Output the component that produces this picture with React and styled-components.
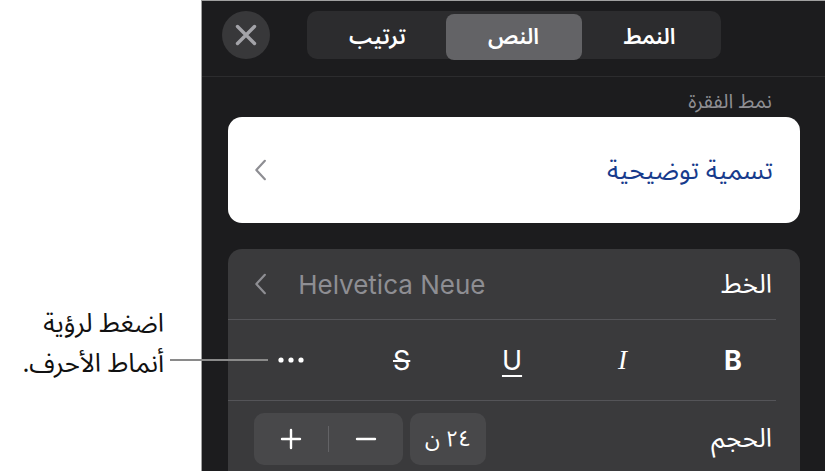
import styled, {createGlobalStyle} from "styled-components";

const GlobalStyle = createGlobalStyle`
  html, body {
    margin: 0;
    padding: 0;
    background: #fff;
  }
  * {
    box-sizing: border-box;
  }
`

const arabic = `"Noto Sans Arabic", "DejaVu Sans", "Noto Sans", sans-serif`
const latin = `Inter, "Liberation Sans", sans-serif`

function Chevron({color = '#8e8e93', size = 18}){
  return(
    <svg width={size * 0.6} height={size} viewBox="0 0 10 18" fill="none">
      <path d="M8.5 1.5 L1.5 9 L8.5 16.5" stroke={color} strokeWidth="1.8" strokeLinecap="round" strokeLinejoin="round"/>
    </svg>
  )
}

function App(){
  return(
    <Page>
      <GlobalStyle/>
      <Callout>
        <CalloutLineText>اضغط لرؤية</CalloutLineText>
        <CalloutLineText>أنماط الأحرف.</CalloutLineText>
      </Callout>
      <CalloutLine/>
      <Panel>
        <Header>
          <CloseButton>
            <svg width="22" height="22" viewBox="0 0 22 22">
              <path d="M2.5 2.5 L19.5 19.5 M19.5 2.5 L2.5 19.5" stroke="#a3a3a8" strokeWidth="3.4" strokeLinecap="round"/>
            </svg>
          </CloseButton>
          <Segmented>
            <Segment>ترتيب</Segment>
            <Segment $active>النص</Segment>
            <Segment>النمط</Segment>
          </Segmented>
        </Header>
        <SectionLabel>نمط الفقرة</SectionLabel>
        <StyleCard>
          <StyleName>تسمية توضيحية</StyleName>
          <Chevron color="#8e8e93" size={22}/>
        </StyleCard>
        <FontCard>
          <FontRow>
            <RowLabel>الخط</RowLabel>
            <FontValue>
              <Chevron color="#8e8e93" size={22}/>
              <span>Helvetica Neue</span>
            </FontValue>
          </FontRow>
          <Divider/>
          <StyleButtons>
            <StyleBtn $bold>B</StyleBtn>
            <StyleBtn $italic>I</StyleBtn>
            <StyleBtn $underline>U</StyleBtn>
            <StyleBtn $strike>S</StyleBtn>
            <StyleBtn>
              <svg width="26" height="6" viewBox="0 0 26 6">
                <circle cx="3" cy="3" r="2.6" fill="#fff"/>
                <circle cx="13" cy="3" r="2.6" fill="#fff"/>
                <circle cx="23" cy="3" r="2.6" fill="#fff"/>
              </svg>
            </StyleBtn>
          </StyleButtons>
          <Divider/>
          <SizeRow>
            <RowLabel>الحجم</RowLabel>
            <SizeControls>
              <SizeValue>٢٤ ن</SizeValue>
              <Stepper>
                <StepButton>
                  <svg width="22" height="22" viewBox="0 0 22 22">
                    <path d="M2 11 H20" stroke="#fff" strokeWidth="2.4" strokeLinecap="round"/>
                  </svg>
                </StepButton>
                <StepDivider/>
                <StepButton>
                  <svg width="22" height="22" viewBox="0 0 22 22">
                    <path d="M2 11 H20 M11 2 V20" stroke="#fff" strokeWidth="2.4" strokeLinecap="round"/>
                  </svg>
                </StepButton>
              </Stepper>
            </SizeControls>
          </SizeRow>
        </FontCard>
      </Panel>
    </Page>
  )
}

export default App

const Page = styled.div`
  position: relative;
  display: flex;
  width: 825px;
  height: 471px;
  overflow: hidden;
  background: #fff;
`

const Callout = styled.div`
  width: 201px;
  flex-shrink: 0;
  display: flex;
  flex-direction: column;
  align-items: flex-end;
  padding: 304px 37px 0 0;
`

const CalloutLineText = styled.div`
  direction: rtl;
  text-align: right;
  font-family: ${arabic};
  font-size: 26px;
  line-height: 40px;
  height: 40px;
  color: #111;
  white-space: nowrap;
`

const CalloutLine = styled.div`
  position: absolute;
  left: 170px;
  top: 359px;
  width: 98px;
  height: 2px;
  background: #8a8a8a;
  z-index: 2;
`

const Panel = styled.div`
  flex: 1;
  background: #1c1c1e;
  border-left: 1px solid #a0a0a0;
  border-top: 1px solid #a0a0a0;
  display: flex;
  flex-direction: column;
`

const Header = styled.div`
  display: grid;
  grid-template-columns: 1fr auto 1fr;
  align-items: center;
  height: 76px;
  padding: 0 20px 8px 20px;
  border-bottom: 1px solid #2c2c2e;
`

const CloseButton = styled.div`
  width: 48px;
  height: 48px;
  border-radius: 50%;
  background: #38383a;
  display: flex;
  align-items: center;
  justify-content: center;
`

const Segmented = styled.div`
  direction: ltr;
  display: grid;
  grid-template-columns: repeat(3, 1fr);
  width: 414px;
  height: 48px;
  padding: 3px;
  border-radius: 10px;
  background: #2c2c2e;
`

const Segment = styled.div`
  display: flex;
  align-items: center;
  justify-content: center;
  border-radius: 8px;
  background: ${p => p.$active ? '#636366' : 'transparent'};
  color: #fff;
  font-family: ${arabic};
  font-size: 22px;
  font-weight: 600;
`

const SectionLabel = styled.div`
  direction: rtl;
  padding: 4px 53px 0 0;
  height: 40px;
  font-family: ${arabic};
  font-size: 20px;
  color: #8e8e93;
`

const StyleCard = styled.div`
  direction: rtl;
  margin: 0 25px 0 26px;
  height: 106px;
  border-radius: 14px;
  background: #fff;
  display: flex;
  align-items: center;
  justify-content: space-between;
  padding: 0 27px 0 26px;
`

const StyleName = styled.div`
  font-family: ${arabic};
  font-size: 26px;
  color: #173b8c;
`

const FontCard = styled.div`
  margin: 26px 25px 0 26px;
  flex: 1;
  border-radius: 14px 14px 0 0;
  background: #3a3a3c;
  direction: rtl;
`

const FontRow = styled.div`
  display: flex;
  align-items: center;
  justify-content: space-between;
  height: 70px;
  padding: 0 28px 0 26px;
`

const RowLabel = styled.div`
  font-family: ${arabic};
  font-size: 26px;
  color: #fff;
`

const FontValue = styled.div`
  direction: ltr;
  display: flex;
  align-items: center;
  gap: 31px;
  font-family: ${latin};
  font-size: 26px;
  color: #8e8e93;
`

const Divider = styled.div`
  height: 1px;
  margin-right: 24px;
  background: #545458;
`

const StyleButtons = styled.div`
  display: grid;
  grid-template-columns: repeat(5, 1fr);
  align-items: center;
  height: 80px;
  padding: 0 12px 0 8px;
`

const StyleBtn = styled.div`
  display: flex;
  justify-content: center;
  align-items: center;
  color: #fff;
  font-size: 27px;
  font-family: ${p => p.$italic ? `"Liberation Serif", serif` : latin};
  font-weight: ${p => p.$bold ? 700 : 400};
  font-style: ${p => p.$italic ? 'italic' : 'normal'};
  text-decoration: ${p => p.$underline ? 'underline' : p.$strike ? 'line-through' : 'none'};
  text-decoration-thickness: 2px;
  text-underline-offset: 5px;
`

const SizeRow = styled.div`
  display: flex;
  align-items: center;
  justify-content: space-between;
  padding: 10px 28px 0 26px;
`

const SizeControls = styled.div`
  display: flex;
  gap: 7px;
`

const SizeValue = styled.div`
  width: 76px;
  height: 52px;
  border-radius: 10px;
  background: #48484a;
  display: flex;
  align-items: center;
  justify-content: center;
  font-family: ${arabic};
  font-size: 22px;
  color: #fff;
`

const Stepper = styled.div`
  display: flex;
  align-items: center;
  width: 149px;
  height: 52px;
  border-radius: 10px;
  background: #48484a;
`

const StepButton = styled.div`
  flex: 1;
  display: flex;
  justify-content: center;
  align-items: center;
`

const StepDivider = styled.div`
  width: 1px;
  height: 26px;
  background: #636366;
`
